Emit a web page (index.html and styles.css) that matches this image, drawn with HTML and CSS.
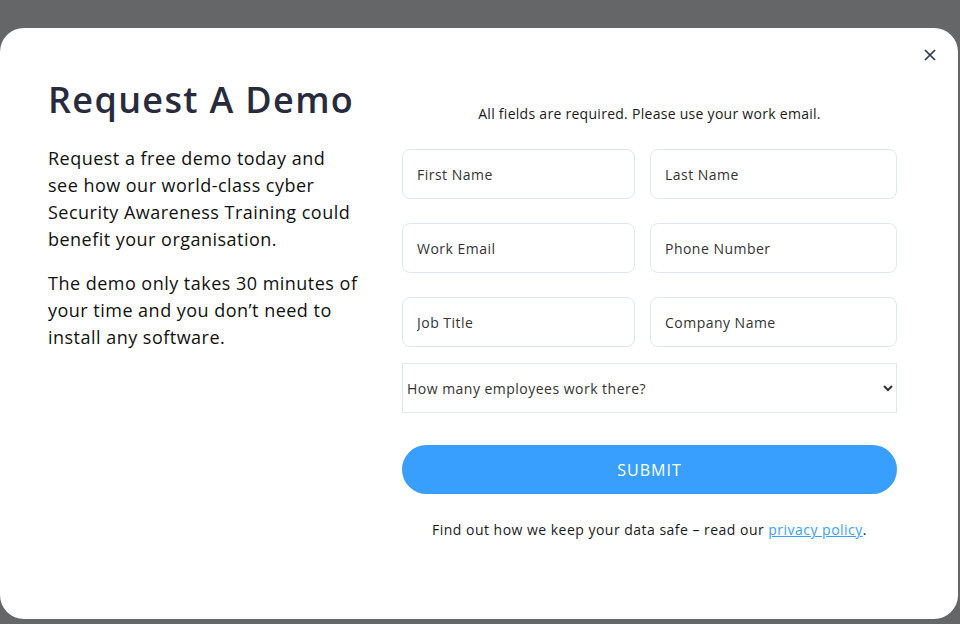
FILE: index.html
```html
<!DOCTYPE html>
<html lang="en">
<head>
    <meta charset="UTF-8">
    <meta name="viewport" content="width=device-width, initial-scale=1.0">
    <title>Request A Demo</title>
    <link rel="stylesheet" href="styles.css">
</head>
<body>
    <div class="overlay">
        <div class="modal">
            <button class="btn-close" aria-label="Close">
                <svg width="12" height="12" viewBox="0 0 12 12"><path d="M1 1 L11 11 M11 1 L1 11" stroke="#2b3a4a" stroke-width="1.7" fill="none"/></svg>
            </button>

            <div class="intro">
                <h1>Request A Demo</h1>
                <p>Request a free demo today and see how our world-class cyber Security Awareness Training could benefit your organisation.</p>
                <p>The demo only takes 30 minutes of your time and you don’t need to install any software.</p>
            </div>

            <form class="demo-form">
                <p class="note">All fields are required. Please use your work email.</p>
                <div class="fields">
                    <input type="text" placeholder="First Name">
                    <input type="text" placeholder="Last Name">
                    <input type="email" placeholder="Work Email">
                    <input type="tel" placeholder="Phone Number">
                    <input type="text" placeholder="Job Title">
                    <input type="text" placeholder="Company Name">
                </div>
                <select class="employees">
                    <option>How many employees work there?</option>
                    <option>1 - 50</option>
                    <option>51 - 250</option>
                    <option>251 - 1000</option>
                    <option>1000+</option>
                </select>
                <button type="submit" class="btn-submit">SUBMIT</button>
                <p class="privacy">Find out how we keep your data safe – read our <a href="#">privacy policy</a>.</p>
            </form>
        </div>
    </div>
</body>
</html>
```

FILE: styles.css
```css
body {
    margin: 0;
    font-family: 'Open Sans', 'DejaVu Sans', sans-serif;
    letter-spacing: 0.03em;
    background-color: #646667;
    overflow: hidden;
}
.overlay {
    height: 624px;
    padding-top: 28px;
    box-sizing: border-box;
}
.modal {
    position: relative;
    width: 958px;
    height: 591px;
    box-sizing: border-box;
    background-color: white;
    border-radius: 24px;
    padding: 50px 61px 0 48px;
    display: flex;
    justify-content: space-between;
}
.btn-close {
    position: absolute;
    top: 17px;
    right: 18px;
    width: 20px;
    height: 20px;
    padding: 0;
    border: none;
    background: none;
    display: flex;
    align-items: center;
    justify-content: center;
    cursor: pointer;
}
.intro {
    width: 311px;
}
.intro h1 {
    margin: 0 0 23px;
    width: 340px;
    font-size: 36px;
    line-height: 44px;
    font-weight: 600;
    letter-spacing: 0.037em;
    color: #282b3d;
}
.intro p {
    margin: 0 0 17px;
    font-size: 18px;
    line-height: 27px;
    color: #111;
}
.demo-form {
    width: 495px;
}
.note {
    margin: 26px 0 25px;
    font-size: 14px;
    line-height: 20px;
    letter-spacing: 0.02em;
    text-align: center;
    color: #1a1a1a;
}
.fields {
    display: grid;
    grid-template-columns: 233px 247px;
    column-gap: 15px;
    row-gap: 24px;
}
.fields input {
    height: 50px;
    box-sizing: border-box;
    border: 1px solid #dde7f3;
    border-radius: 8px;
    padding: 0 14px;
    font-family: inherit;
    font-size: 14px;
    letter-spacing: inherit;
    color: #222;
    outline: none;
}
.fields input::placeholder {
    color: #333;
}
.employees {
    display: block;
    width: 100%;
    height: 50px;
    margin-top: 16px;
    border: 1px solid #dde7f3;
    border-radius: 0;
    background-color: white;
    font-family: inherit;
    font-size: 14px;
    letter-spacing: inherit;
    color: #333;
    outline: none;
}
.btn-submit {
    display: block;
    width: 100%;
    height: 49px;
    margin-top: 32px;
    border: none;
    border-radius: 25px;
    background-color: #399ffe;
    color: white;
    font-family: inherit;
    font-size: 16px;
    letter-spacing: 1px;
    cursor: pointer;
}
.privacy {
    margin: 26px 0 0;
    font-size: 14px;
    line-height: 20px;
    text-align: center;
    color: #1a1a1a;
}
.privacy a {
    color: #3a9ffe;
}
```
